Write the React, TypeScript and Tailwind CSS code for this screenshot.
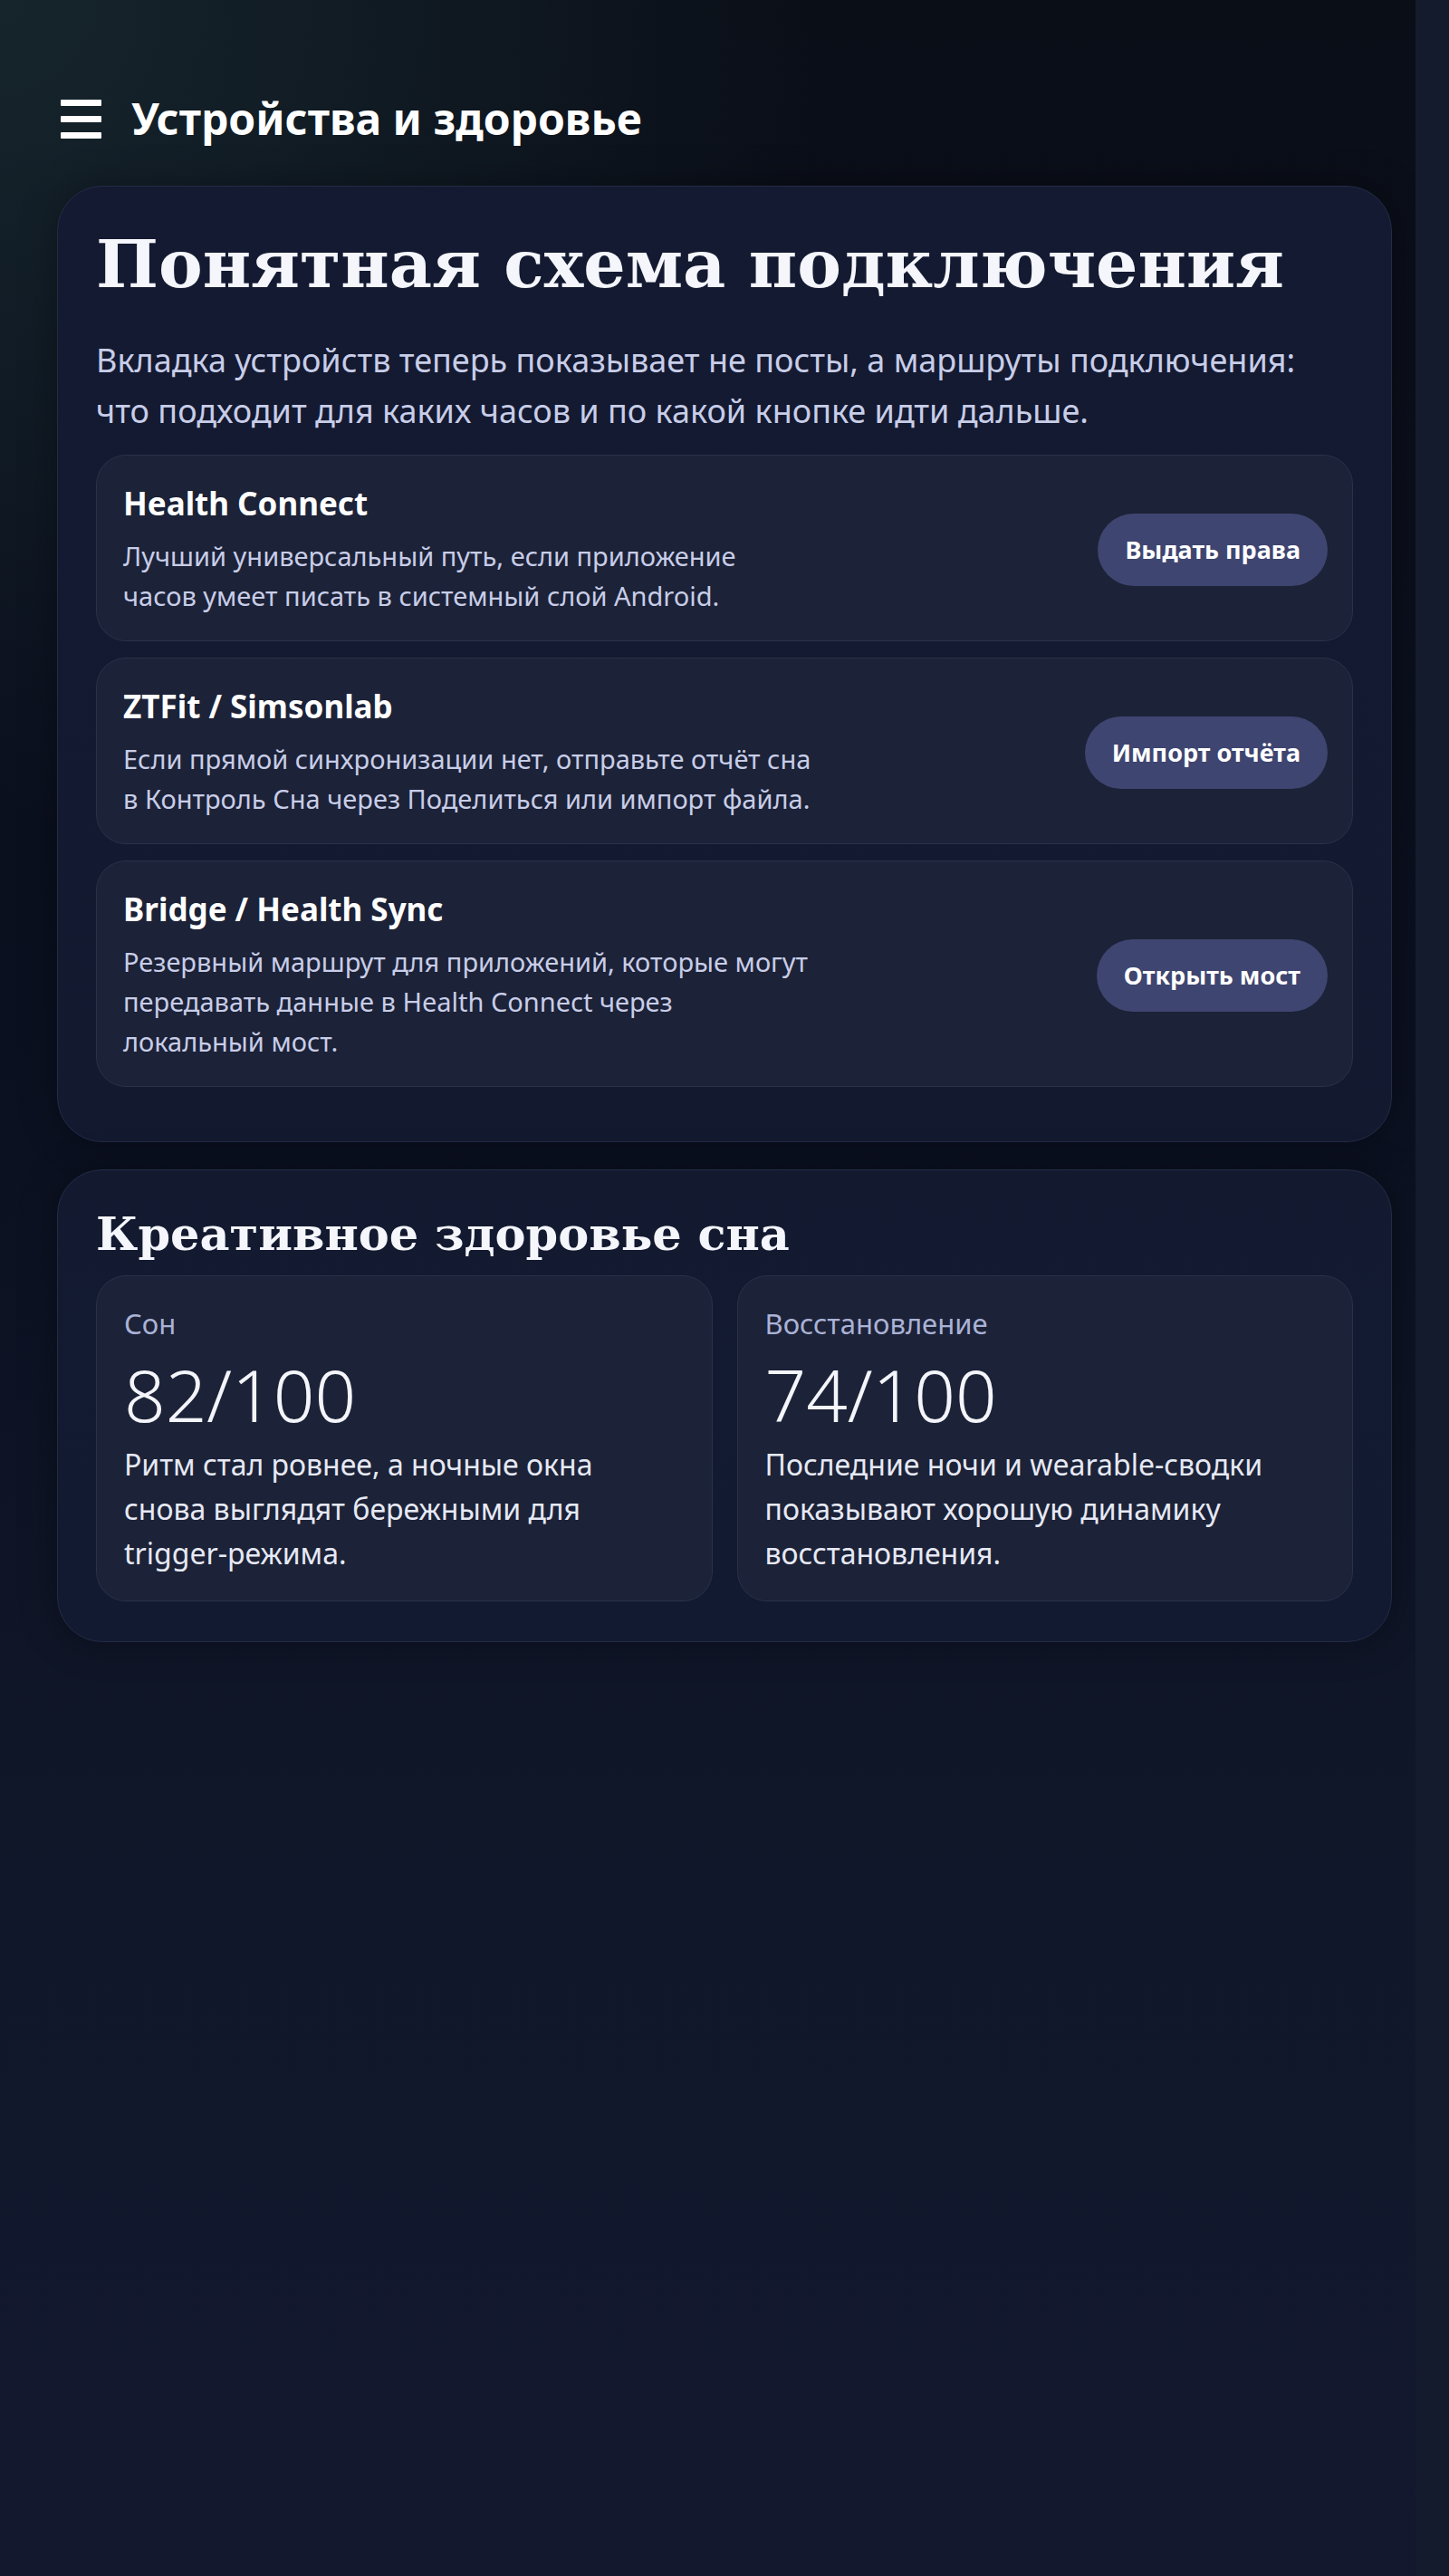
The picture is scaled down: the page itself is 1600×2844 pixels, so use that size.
import React from 'react';

interface Route {
  title: string;
  lines: string[];
  action: string;
}

interface Stat {
  label: string;
  value: string;
  lines: string[];
}

const routes: Route[] = [
  {
    title: 'Health Connect',
    lines: ['Лучший универсальный путь, если приложение', 'часов умеет писать в системный слой Android.'],
    action: 'Выдать права',
  },
  {
    title: 'ZTFit / Simsonlab',
    lines: ['Если прямой синхронизации нет, отправьте отчёт сна', 'в Контроль Сна через Поделиться или импорт файла.'],
    action: 'Импорт отчёта',
  },
  {
    title: 'Bridge / Health Sync',
    lines: ['Резервный маршрут для приложений, которые могут', 'передавать данные в Health Connect через', 'локальный мост.'],
    action: 'Открыть мост',
  },
];

const stats: Stat[] = [
  {
    label: 'Сон',
    value: '82/100',
    lines: ['Ритм стал ровнее, а ночные окна', 'снова выглядят бережными для', 'trigger-режима.'],
  },
  {
    label: 'Восстановление',
    value: '74/100',
    lines: ['Последние ночи и wearable-сводки', 'показывают хорошую динамику', 'восстановления.'],
  },
];

// keeps the original wrapping points of the copy
const Lines = ({ lines }: { lines: string[] }) => (
  <>
    {lines.map((line, i) => (
      <React.Fragment key={i}>
        {i > 0 && <br />}
        {line}
      </React.Fragment>
    ))}
  </>
);

const RouteCard = ({ route }: { route: Route }) => (
  <div className="flex items-center justify-between rounded-[33px] border border-[#2a3149] bg-[#1c2237] pl-[29px] pr-[27px] pt-[31px] pb-[27px]">
    <div>
      <h3 className="text-[35px] font-bold leading-[44px] text-white">{route.title}</h3>
      <p className="mt-[14px] whitespace-nowrap text-[29px] leading-[44px] text-[#c8cde8]">
        <Lines lines={route.lines} />
      </p>
    </div>
    <button className="h-[80px] shrink-0 rounded-full bg-[#3e4570] px-[30px] text-[27px] font-bold text-white">
      {route.action}
    </button>
  </div>
);

const StatCard = ({ stat }: { stat: Stat }) => (
  <div className="rounded-[33px] border border-[#2a3149] bg-[#1c2237] px-[30px] pt-[32px] pb-[28px]">
    <div className="text-[31px] leading-[40px] text-[#aab2d6]">{stat.label}</div>
    <div className="mt-[10px] text-[80px] font-light leading-[96px] text-[#f3f5fb]">{stat.value}</div>
    <p className="mt-[5px] text-[32px] leading-[49px] text-[#e6e9f5]">
      <Lines lines={stat.lines} />
    </p>
  </div>
);

export default function App() {
  return (
    <div className="flex min-h-[2844px] bg-[#0b101b] font-['Noto_Sans',sans-serif]">
      <main className="flex-1 bg-[radial-gradient(circle_at_0%_0%,rgba(34,60,66,0.5),transparent_28%),linear-gradient(180deg,#0a0e17_0%,#0b1020_40%,#101729_70%,#13182f_100%)] pl-[63px] pr-[26px] pt-[103px] pb-[200px]">
        <header className="flex h-[56px] items-center gap-[33px] pl-[4px]">
          <div className="flex w-[45px] flex-col gap-[11px]">
            <span className="h-[7px] rounded-[1px] bg-white" />
            <span className="h-[7px] rounded-[1px] bg-white" />
            <span className="h-[7px] rounded-[1px] bg-white" />
          </div>
          <h1 className="text-[48px] font-bold text-white">Устройства и здоровье</h1>
        </header>

        <section className="mt-[46px] rounded-[50px] border border-[#232b45] bg-[linear-gradient(180deg,#141a31,#131a30)] px-[42px] pt-[39px] pb-[60px] shadow-[0_0_40px_rgba(0,0,0,0.35)]">
          <h2 className="font-['DejaVu_Serif',serif] text-[73px] font-bold leading-[92px] text-[#f4f6fb]">
            Понятная схема подключения
          </h2>
          <p className="mt-[33px] text-[36px] leading-[56px] text-[#c8cde8]">
            Вкладка устройств теперь показывает не посты, а маршруты подключения: что подходит для каких часов и по какой кнопке идти дальше.
          </p>
          <div className="mt-[20px] flex flex-col gap-[18px]">
            {routes.map((route) => (
              <RouteCard key={route.title} route={route} />
            ))}
          </div>
        </section>

        <section className="mt-[30px] rounded-[50px] border border-[#232b45] bg-[linear-gradient(180deg,#131a30,#121a32)] px-[42px] pt-[39px] pb-[44px] shadow-[0_0_40px_rgba(0,0,0,0.35)]">
          <h2 className="font-['DejaVu_Serif',serif] text-[51px] font-bold leading-[62px] text-[#f4f6fb]">
            Креативное здоровье сна
          </h2>
          <div className="mt-[15px] grid grid-cols-2 gap-[27px]">
            {stats.map((stat) => (
              <StatCard key={stat.label} stat={stat} />
            ))}
          </div>
        </section>
      </main>
      <aside className="w-[37px] bg-[#141b2d]" />
    </div>
  );
}
